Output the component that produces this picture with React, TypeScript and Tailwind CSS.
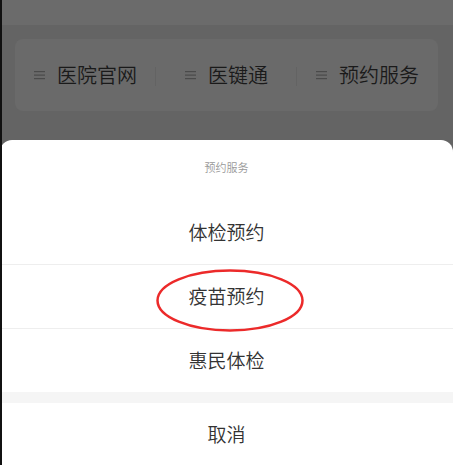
import React from "react";

const font = { fontFamily: '"Noto Sans CJK SC", "Noto Sans", sans-serif' };

function MenuIcon() {
  return (
    <svg width="11" height="10" viewBox="0 0 11 10" className="shrink-0">
      <rect x="0" y="1" width="11" height="1.2" fill="#4a4a4a" />
      <rect x="0" y="4.5" width="11" height="1.2" fill="#4a4a4a" />
      <rect x="0" y="8" width="11" height="1.2" fill="#4a4a4a" />
    </svg>
  );
}

function CardItem({ label, divider }: { label: string; divider: boolean }) {
  return (
    <div className="relative flex items-center justify-center gap-[12px]">
      <MenuIcon />
      <span className="text-[20px] font-[350] leading-[24px] text-[#1a1a1a]">{label}</span>
      {divider && <div className="absolute right-0 top-[28px] h-[19px] w-px bg-[#636363]" />}
    </div>
  );
}

export default function App() {
  return (
    <div
      className="relative flex h-[465px] w-[453px] flex-col overflow-hidden bg-[#646464]"
      style={font}
    >
      <div className="h-[25px] bg-[#6b6b6b]" />
      <div className="mx-[15px] mt-[14px] grid h-[72px] grid-cols-3 rounded-[8px] bg-[#6a6a6a]">
        <CardItem label="医院官网" divider />
        <CardItem label="医键通" divider />
        <CardItem label="预约服务" divider={false} />
      </div>

      <div className="mt-auto flex flex-col overflow-hidden rounded-t-[12px] bg-white font-[350]">
        <div className="flex h-[60px] justify-center pt-[19px]">
          <span className="text-[11px] leading-[16px] text-[#999999]">预约服务</span>
        </div>
        <div className="flex h-[65px] items-center justify-center border-b border-[#eeeeee] text-[19px] text-[#333333]">
          体检预约
        </div>
        <div className="flex h-[64px] items-center justify-center border-b border-[#eeeeee] text-[19px] text-[#333333]">
          疫苗预约
        </div>
        <div className="flex h-[63px] items-center justify-center text-[19px] text-[#333333]">
          惠民体检
        </div>
        <div className="h-[11px] bg-[#f5f5f5]" />
        <div className="flex h-[62px] items-center justify-center text-[19px] text-[#333333]">
          取消
        </div>
      </div>

      <svg
        className="pointer-events-none absolute left-[155px] top-[268px]"
        width="150"
        height="65"
        viewBox="0 0 150 65"
      >
        <ellipse cx="75" cy="32.5" rx="72.5" ry="30" fill="none" stroke="#ec2a2a" strokeWidth="2.5" />
      </svg>

      <div className="absolute left-0 top-0 h-full w-[2px] bg-[#111111]" />
    </div>
  );
}
